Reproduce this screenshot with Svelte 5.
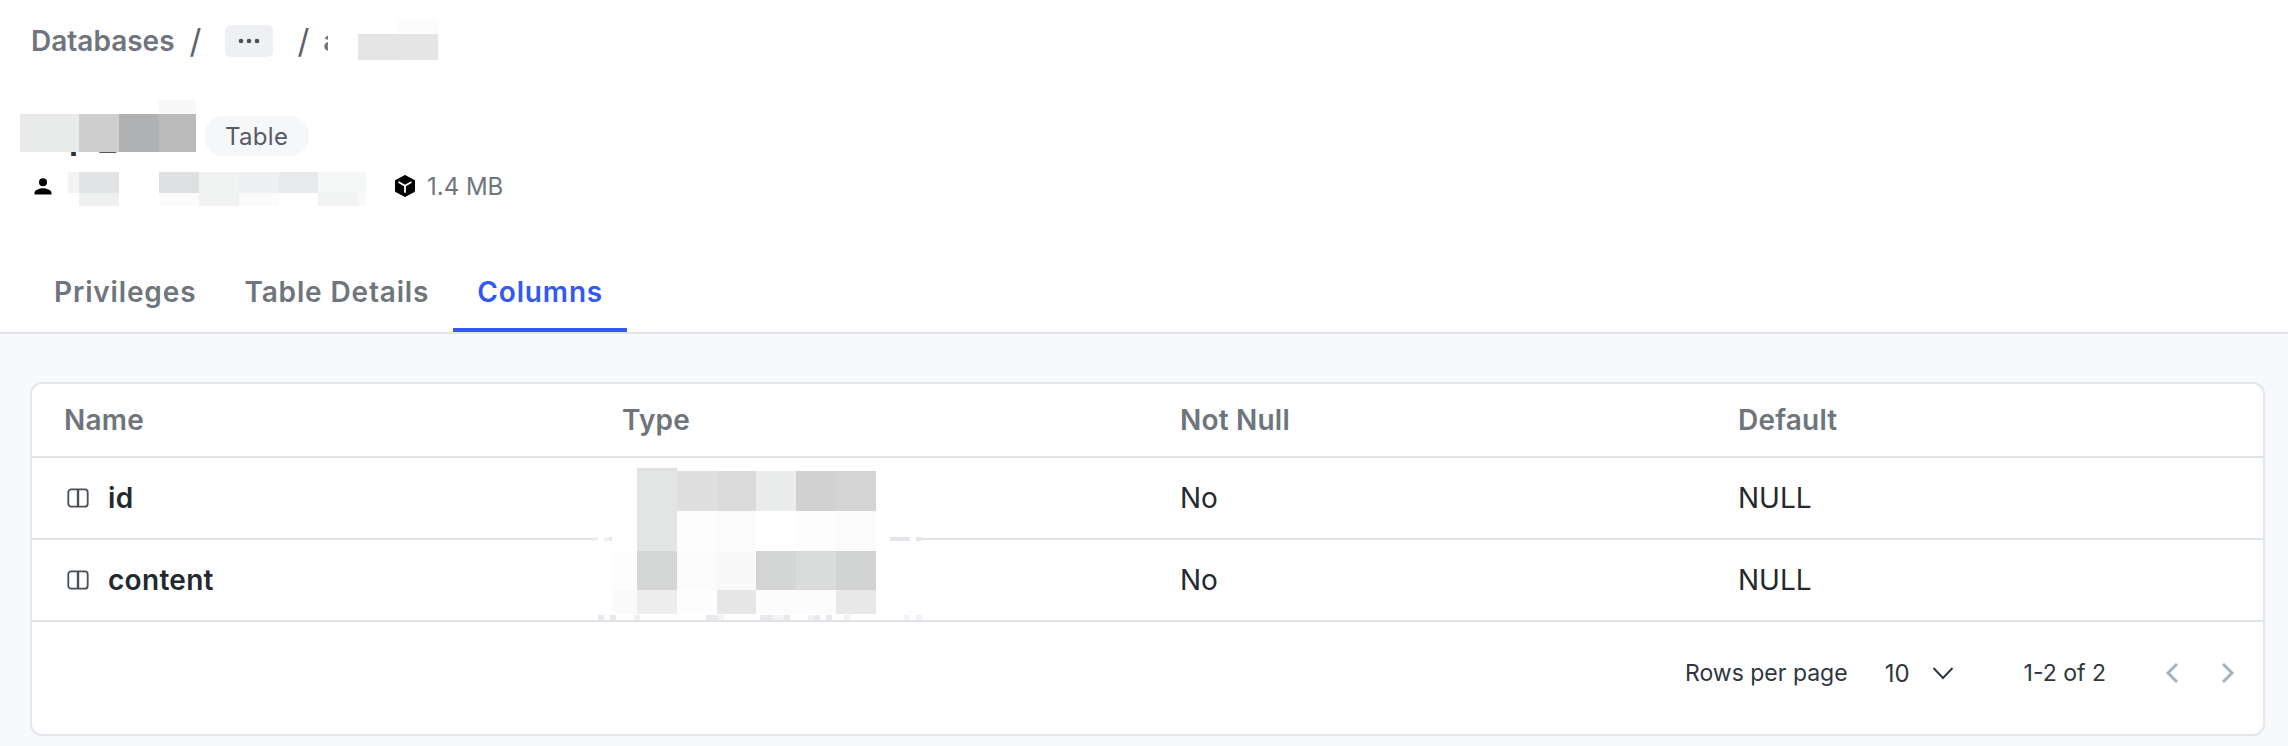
<script lang="ts">
	type Block = { x: number; y: number; w: number; h: number; c: string };

	// Pixelated redactions sitting on top of the names in the page.
	const blocks: Block[] = [
		// breadcrumb
		{ x: 328, y: 20, w: 30, h: 40, c: '#fefefe' },
		{ x: 398, y: 20, w: 40, h: 14, c: '#fbfbfb' },
		{ x: 358, y: 34, w: 40, h: 26, c: '#e3e4e3' },
		{ x: 398, y: 34, w: 40, h: 26, c: '#e5e5e5' },
		// title
		{ x: 159, y: 100, w: 37, h: 14, c: '#f6f7f6' },
		{ x: 20, y: 114, w: 59, h: 38, c: '#e9eaea' },
		{ x: 79, y: 114, w: 40, h: 38, c: '#cdcecd' },
		{ x: 119, y: 114, w: 40, h: 38, c: '#b0b1b2' },
		{ x: 159, y: 114, w: 37, h: 38, c: '#b9bab9' },
		// owner
		{ x: 68, y: 172, w: 11, h: 21, c: '#f3f3f3' },
		{ x: 79, y: 172, w: 40, h: 21, c: '#e2e3e5' },
		{ x: 79, y: 193, w: 40, h: 13, c: '#eff0f0' },
		{ x: 159, y: 172, w: 40, h: 21, c: '#dfe0e2' },
		{ x: 199, y: 172, w: 40, h: 21, c: '#f1f2f2' },
		{ x: 239, y: 172, w: 40, h: 21, c: '#eeeff0' },
		{ x: 279, y: 172, w: 39, h: 21, c: '#e8e9ea' },
		{ x: 318, y: 172, w: 48, h: 21, c: '#f5f6f6' },
		{ x: 159, y: 193, w: 40, h: 13, c: '#fbfbfb' },
		{ x: 199, y: 193, w: 40, h: 13, c: '#f0f1f1' },
		{ x: 239, y: 193, w: 40, h: 13, c: '#fbfbfb' },
		{ x: 318, y: 193, w: 40, h: 13, c: '#f2f3f3' },
		{ x: 358, y: 193, w: 8, h: 13, c: '#f9f9f9' },
		// type column, first row band
		{ x: 637, y: 468, w: 40, h: 3, c: '#dfe0e2' },
		{ x: 637, y: 471, w: 40, h: 80, c: '#e3e5e4' },
		{ x: 677, y: 471, w: 40, h: 40, c: '#dedfde' },
		{ x: 717, y: 471, w: 39, h: 40, c: '#dadbda' },
		{ x: 756, y: 471, w: 40, h: 40, c: '#ebecec' },
		{ x: 796, y: 471, w: 40, h: 40, c: '#d0d1d0' },
		{ x: 836, y: 471, w: 40, h: 40, c: '#d3d4d3' },
		{ x: 677, y: 511, w: 40, h: 40, c: '#fcfdfc' },
		{ x: 717, y: 511, w: 39, h: 40, c: '#fbfbfb' },
		{ x: 756, y: 511, w: 40, h: 40, c: '#ffffff' },
		{ x: 796, y: 511, w: 40, h: 40, c: '#fdfdfd' },
		{ x: 836, y: 511, w: 40, h: 40, c: '#fbfbfb' },
		// gap in the row line, with the leftovers of the pixelation
		{ x: 594, y: 537, w: 43, h: 4, c: '#ffffff' },
		{ x: 876, y: 537, w: 46, h: 4, c: '#ffffff' },
		{ x: 594, y: 537, w: 4, h: 4, c: '#f0f0f3' },
		{ x: 604, y: 537, w: 6, h: 4, c: '#f0f0f3' },
		{ x: 610, y: 537, w: 2, h: 4, c: '#e6e6ea' },
		{ x: 890, y: 537, w: 20, h: 4, c: '#e5e5ea' },
		{ x: 916, y: 537, w: 6, h: 4, c: '#e5e5ea' },
		// second row band
		{ x: 612, y: 551, w: 25, h: 39, c: '#fdfdfd' },
		{ x: 637, y: 551, w: 40, h: 39, c: '#d5d6d6' },
		{ x: 677, y: 551, w: 40, h: 39, c: '#fbfbfb' },
		{ x: 717, y: 551, w: 39, h: 39, c: '#f9f9f9' },
		{ x: 756, y: 551, w: 40, h: 39, c: '#d4d5d5' },
		{ x: 796, y: 551, w: 40, h: 39, c: '#dadbdb' },
		{ x: 836, y: 551, w: 40, h: 39, c: '#d2d3d3' },
		{ x: 612, y: 590, w: 25, h: 24, c: '#fafafa' },
		{ x: 637, y: 590, w: 40, h: 24, c: '#ededed' },
		{ x: 677, y: 590, w: 40, h: 24, c: '#fdfdfd' },
		{ x: 717, y: 590, w: 39, h: 24, c: '#e5e6e5' },
		{ x: 756, y: 590, w: 80, h: 24, c: '#fbfcfb' },
		{ x: 836, y: 590, w: 40, h: 24, c: '#e8e8e8' },
		// specks above the last row line
		{ x: 598, y: 615, w: 6, h: 5, c: '#e8e8ee' },
		{ x: 610, y: 615, w: 6, h: 5, c: '#e8e8ee' },
		{ x: 634, y: 615, w: 6, h: 5, c: '#f1f1f4' },
		{ x: 706, y: 615, w: 12, h: 5, c: '#e8e8ee' },
		{ x: 718, y: 615, w: 6, h: 5, c: '#f3f3f6' },
		{ x: 760, y: 615, w: 12, h: 5, c: '#e8e8ee' },
		{ x: 772, y: 615, w: 12, h: 5, c: '#f3f3f6' },
		{ x: 784, y: 615, w: 6, h: 5, c: '#e8e8ee' },
		{ x: 808, y: 615, w: 6, h: 5, c: '#f1f1f4' },
		{ x: 814, y: 615, w: 6, h: 5, c: '#e8e8ee' },
		{ x: 826, y: 615, w: 6, h: 5, c: '#e8e8ee' },
		{ x: 844, y: 615, w: 6, h: 5, c: '#f1f1f4' },
		{ x: 904, y: 615, w: 6, h: 5, c: '#f3f3f6' },
		{ x: 916, y: 615, w: 6, h: 5, c: '#f1f1f4' }
	];

	const rows = [{ name: 'id' }, { name: 'content' }];
</script>

<div class="page">
	<header class="head">
		<nav class="crumbs">
			<span class="crumb">Databases</span>
			<span class="slash">/</span>
			<span class="more">
				<svg width="22" height="6" viewBox="0 0 22 6"><circle cx="3" cy="3" r="2.3" /><circle cx="11" cy="3" r="2.3" /><circle cx="19" cy="3" r="2.3" /></svg>
			</span>
			<span class="slash second">/</span>
			<span class="crumb last">a</span>
		</nav>

		<div class="title-row">
			<h1>tp_</h1>
			<span class="pill">Table</span>
		</div>

		<div class="meta">
			<svg class="person" width="24" height="24" viewBox="0 0 24 24"><circle cx="12" cy="8.2" r="4" /><path d="M3.5 20.5v-1.700c0-3 5.600-4.500 8.500-4.500s8.500 1.500 8.500 4.500v1.700z" /></svg>
			<span class="owner"></span>
			<svg class="cube" width="22" height="22" viewBox="0 0 22 22">
				<path d="M11 .5 20.500 5.500v11L11 21.500 1.500 16.500v-11z" stroke="#000" stroke-width="1" stroke-linejoin="round" />
				<path d="M4.500 7 11 10.800 17.500 7M11 10.800v7" fill="none" stroke="#fff" stroke-width="1.800" />
			</svg>
			<span class="size">1.4 MB</span>
		</div>
	</header>

	<div class="tabs">
		<button class="tab">Privileges</button>
		<button class="tab">Table Details</button>
		<button class="tab active">Columns</button>
	</div>

	<main class="body">
		<section class="card">
			<div class="row header">
				<div>Name</div>
				<div>Type</div>
				<div>Not Null</div>
				<div>Default</div>
			</div>
			{#each rows as r}
				<div class="row">
					<div class="name">
						<svg width="22" height="20" viewBox="0 0 22 20" fill="none" stroke="#4a5058" stroke-width="1.800"><rect x="1.300" y="1.300" width="19.400" height="17.400" rx="3" /><path d="M11 1.500v17" stroke-width="2.400" /></svg>
						{r.name}
					</div>
					<div></div>
					<div>No</div>
					<div>NULL</div>
				</div>
			{/each}
			<footer class="pager">
				<span>Rows per page</span>
				<span class="size-select">
					10
					<svg width="22" height="14" viewBox="0 0 22 14" fill="none" stroke="#30363d" stroke-width="2"><path d="M1.500 2 11 12l9.500-10" /></svg>
				</span>
				<span class="count">1-2 of 2</span>
				<span class="arrows">
					<svg width="14" height="22" viewBox="0 0 14 22" fill="none" stroke="#a9b1bb" stroke-width="3"><path d="M12 2 3 11l9 9" /></svg>
					<svg width="14" height="22" viewBox="0 0 14 22" fill="none" stroke="#a9b1bb" stroke-width="3"><path d="m2 2 9 9-9 9" /></svg>
				</span>
			</footer>
		</section>
	</main>

	{#each blocks as b}
		<i class="block" style="left:{b.x}px;top:{b.y}px;width:{b.w}px;height:{b.h}px;background:{b.c}"></i>
	{/each}
</div>

<style>
	:global(body) {
		margin: 0;
		background: #fff;
	}
	.page {
		position: relative;
		width: 2288px;
		height: 746px;
		overflow: hidden;
		font-family: Inter, 'Liberation Sans', sans-serif;
		color: #24292f;
		background: #f8f9fb;
	}
	.head {
		background: #fff;
		height: 264px;
		padding: 24px 31px 0;
		box-sizing: border-box;
	}
	.crumbs {
		display: flex;
		align-items: center;
		height: 34px;
		font-size: 28px;
		font-weight: 600;
		color: #6e757c;
	}
	.slash {
		margin-left: 15px;
		font-weight: 400;
		font-size: 33px;
		color: #5c636a;
	}
	.slash.second {
		margin-left: 24px;
	}
	.more {
		display: flex;
		align-items: center;
		justify-content: center;
		width: 48px;
		height: 32px;
		margin-left: 24px;
		background: #eff0f4;
		border-radius: 5px;
		fill: #4a5058;
	}
	.last {
		margin-left: 14px;
	}
	.title-row {
		display: flex;
		align-items: center;
		gap: 10px;
		height: 40px;
		margin-top: 58px;
		margin-left: -11px;
	}
	h1 {
		margin: 0;
		width: 174px;
		padding-left: 28px;
		box-sizing: border-box;
		font-size: 36px;
		font-weight: 600;
		line-height: 40px;
		letter-spacing: 8px;
		color: #2b3036;
	}
	.pill {
		display: flex;
		align-items: center;
		height: 40px;
		padding: 0 21px;
		border-radius: 20px;
		background: #f6f7f9;
		color: #555c64;
		font-size: 24px;
		letter-spacing: 0.3px;
	}
	.meta {
		display: flex;
		align-items: center;
		height: 24px;
		margin-top: 18px;
		font-size: 24px;
		color: #6e757c;
	}
	.person {
		fill: #000;
	}
	.owner {
		width: 339px;
	}
	.size {
		margin-left: 11px;
	}
	.tabs {
		display: flex;
		height: 70px;
		padding-left: 30px;
		background: #fff;
		border-bottom: 2px solid #e1e4e8;
		margin-top: -2px;
	}
	.tab {
		padding: 0 24px 6px;
		border: 0;
		border-bottom: 4px solid transparent;
		background: none;
		font: 600 28px Inter, 'Liberation Sans', sans-serif;
		color: #6e757c;
		letter-spacing: 0.85px;
	}
	.tab.active {
		color: #3358f4;
		border-bottom-color: #3358f4;
	}
	.body {
		padding: 48px 23px 0 30px;
	}
	.card {
		background: #fff;
		border: 2px solid #e3e6ea;
		border-radius: 12px;
		height: 354px;
		box-sizing: border-box;
		display: flex;
		flex-direction: column;
	}
	.row {
		display: grid;
		grid-template-columns: repeat(4, 558px);
		align-items: center;
		height: 80px;
		border-bottom: 2px solid #dfe2e6;
		font-size: 28px;
		color: #24292f;
	}
	.row > div {
		padding-left: 32px;
	}
	.row.header {
		height: 72px;
		font-weight: 600;
		color: #6e757c;
		letter-spacing: 0.2px;
	}
	.name {
		display: flex;
		align-items: center;
		gap: 19px;
		font-weight: 600;
		color: #24292f;
		letter-spacing: 0.3px;
	}
	.name svg {
		margin-left: 3px;
	}
	.pager {
		display: flex;
		align-items: center;
		flex: 1;
		justify-content: flex-end;
		font-size: 23px;
		color: #30363d;
		padding: 0 28px 10px 0;
	}
	.size-select {
		display: flex;
		align-items: center;
		gap: 22px;
		margin-left: 37px;
		font-size: 24px;
	}
	.count {
		margin-left: 70px;
	}
	.arrows {
		display: flex;
		gap: 42px;
		margin-left: 59px;
	}
	.block {
		position: absolute;
		display: block;
	}
</style>
